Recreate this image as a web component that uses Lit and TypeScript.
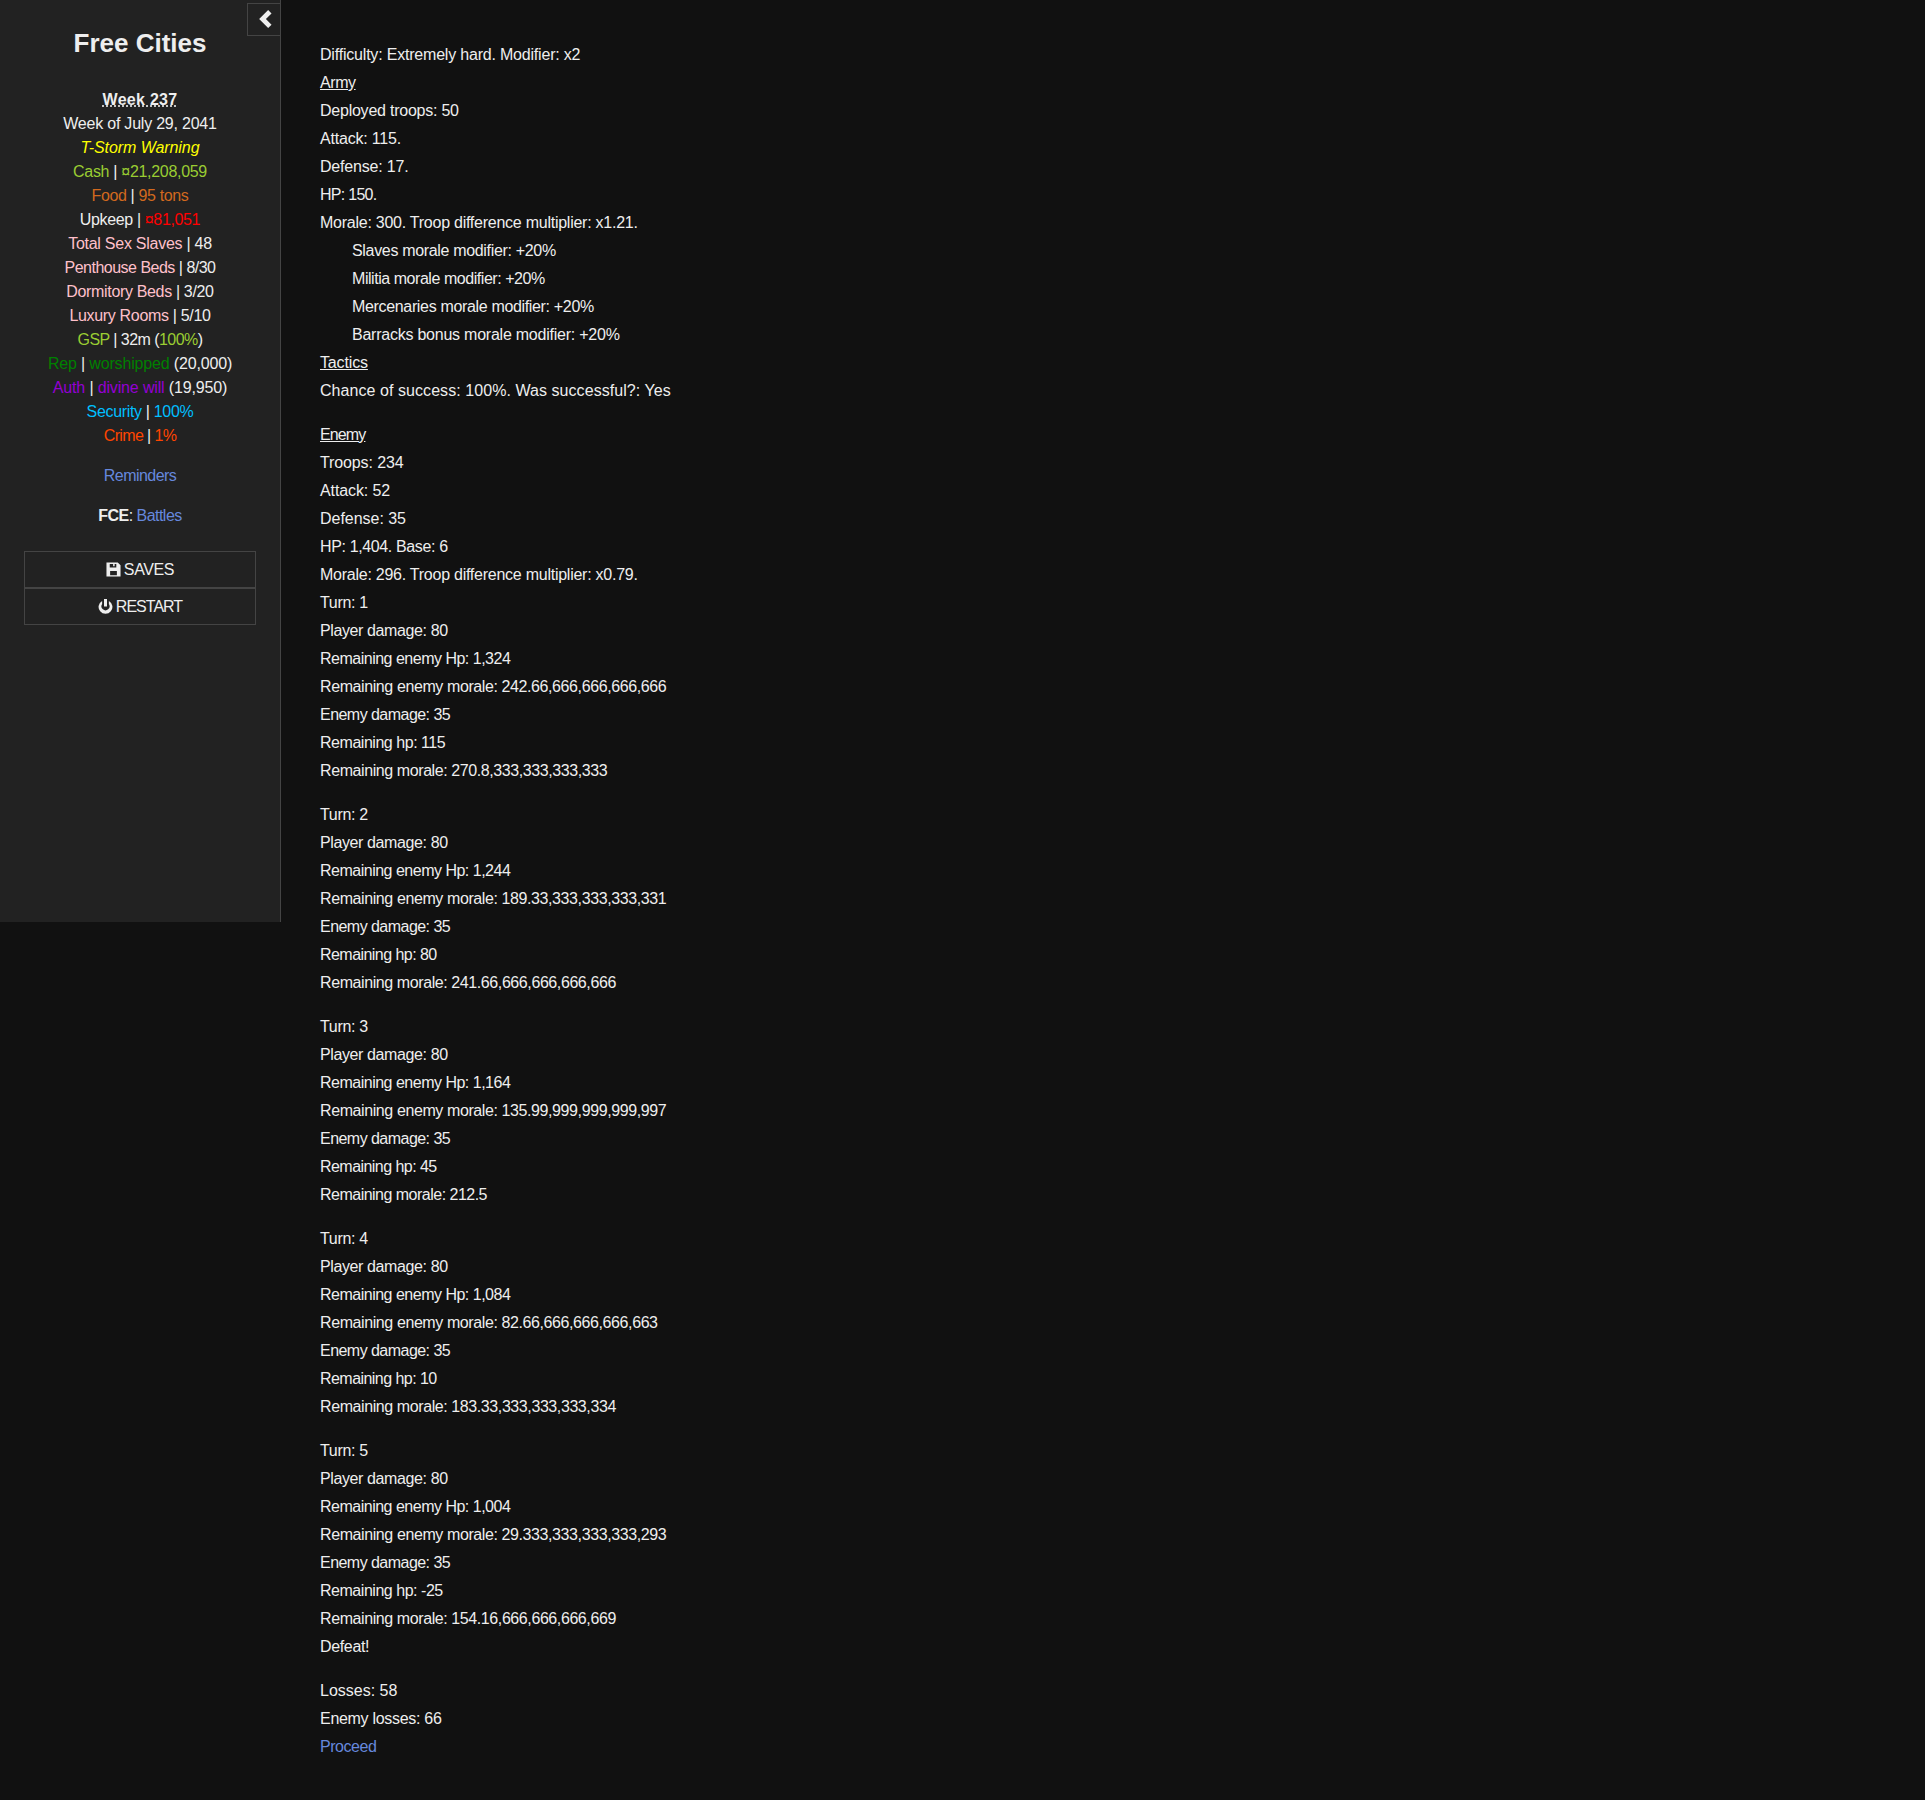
import { LitElement, html, css, svg } from "lit";
import { customElement } from "lit/decorators.js";

type Line = { t: string; e: number; c?: string };
const K = 1925 / 1568;
const FONT = '"Liberation Sans"';
const ctx = document.createElement("canvas").getContext("2d")!;

/** Letter-spacing that makes `text` span `span` reference (shrunk) pixels. */
function spacing(text: string, span: number, style = "") {
  ctx.font = `${style} 16px ${FONT}`;
  const natural = ctx.measureText(text).width;
  return `letter-spacing:${((span * K - natural) / text.length).toFixed(3)}px`;
}

const turn = (n: number, hp: string, hpEnd: number, morale: string, moraleEnd: number, remaining: string, remEnd: number): Line[] => [
  { t: `Turn: ${n}`, e: 300 },
  { t: "Player damage: 80", e: 365 },
  { t: `Remaining enemy Hp: ${hp}`, e: hpEnd },
  { t: `Remaining enemy morale: ${morale}`, e: moraleEnd },
  { t: "Enemy damage: 35", e: 367 },
  { t: `Remaining hp: ${remaining}`, e: remEnd },
];

const blocks: Line[][] = [
  [
    { t: "Difficulty: Extremely hard. Modifier: x2", e: 473 },
    { t: "Army", e: 290, c: "u" },
    { t: "Deployed troops: 50", e: 374 },
    { t: "Attack: 115.", e: 327 },
    { t: "Defense: 17.", e: 333 },
    { t: "HP: 150.", e: 307 },
    { t: "Morale: 300. Troop difference multiplier: x1.21.", e: 520 },
    { t: "Slaves morale modifier: +20%", e: 453, c: "ind" },
    { t: "Militia morale modifier: +20%", e: 444, c: "ind" },
    { t: "Mercenaries morale modifier: +20%", e: 484, c: "ind" },
    { t: "Barracks bonus morale modifier: +20%", e: 505, c: "ind" },
    { t: "Tactics", e: 300, c: "u" },
    { t: "Chance of success: 100%. Was successful?: Yes", e: 547 },
  ],
  [
    { t: "Enemy", e: 298, c: "u" },
    { t: "Troops: 234", e: 329 },
    { t: "Attack: 52", e: 318 },
    { t: "Defense: 35", e: 331 },
    { t: "HP: 1,404. Base: 6", e: 365 },
    { t: "Morale: 296. Troop difference multiplier: x0.79.", e: 520 },
    ...turn(1, "1,324", 416, "242.66,666,666,666,666", 543, "115", 363),
    { t: "Remaining morale: 270.8,333,333,333,333", e: 495 },
  ],
  [
    ...turn(2, "1,244", 416, "189.33,333,333,333,331", 543, "80", 356),
    { t: "Remaining morale: 241.66,666,666,666,666", e: 502 },
  ],
  [
    ...turn(3, "1,164", 416, "135.99,999,999,999,997", 543, "45", 356),
    { t: "Remaining morale: 212.5", e: 397 },
  ],
  [
    ...turn(4, "1,084", 416, "82.66,666,666,666,663", 536, "10", 356),
    { t: "Remaining morale: 183.33,333,333,333,334", e: 502 },
  ],
  [
    ...turn(5, "1,004", 416, "29.333,333,333,333,293", 543, "-25", 361),
    { t: "Remaining morale: 154.16,666,666,666,669", e: 502 },
    { t: "Defeat!", e: 301 },
  ],
  [
    { t: "Losses: 58", e: 324 },
    { t: "Enemy losses: 66", e: 360 },
    { t: "Proceed", e: 307, c: "link" },
  ],
];

const floppy = svg`<path fill="currentColor" fill-rule="evenodd" d="M.5 .5h12L15.5 3.5V15.5H.5zM4 2V5.8h7V2H9.2v2.6H7.6V2zM4.4 14.2h7.2V9.6H4.4z"/>`;
const power = svg`<path fill="currentColor" d="M6.4 0h3.2v8H6.4zM4.4 2v3.4a4.3 4.3 0 1 0 7.2 0V2a7.4 7.4 0 1 1-7.2 0z"/>`;
const chevron = svg`<path fill="currentColor" d="M10.8 0l3 3-5 5 5 5-3 3L2.8 8z"/>`;

@customElement("app-root")
export class AppRoot extends LitElement {
  static styles = css`
    :host {
      display: block;
      min-height: 1800px;
      background: #111;
      color: #eee;
      font: 16px/28px "Liberation Sans", Arial, sans-serif;
    }
    .page { display: flex; align-items: flex-start; }
    .bar {
      position: relative;
      box-sizing: border-box;
      width: 281px;
      height: 922px;
      flex: none;
      background: #222;
      border-right: 1px solid #444;
      padding: 24px 24px 0;
    }
    .stow {
      position: absolute;
      top: 3px;
      right: 0;
      box-sizing: border-box;
      width: 33px;
      height: 33px;
      background: #222;
      border: 1px solid #444;
      border-right: 0;
      color: #eee;
      display: flex;
      align-items: center;
      justify-content: flex-end;
      padding: 0 6px 2px 0;
    }
    .stow svg { width: 18px; height: 18px; display: block; }
    h1 {
      margin: 0 0 26px;
      font-size: 26px;
      line-height: 38px;
      font-weight: bold;
      text-align: center;
    }
    .stats { text-align: center; line-height: 24px; white-space: nowrap; }
    .week {
      font-weight: bold;
      text-decoration: underline dotted;
    }
    .italic { font-style: italic; }
    .yellow { color: yellow; }
    .yg { color: yellowgreen; }
    .choc { color: chocolate; }
    .red { color: red; }
    .pink { color: pink; }
    .green { color: green; }
    .violet { color: darkviolet; }
    .sky { color: deepskyblue; }
    .orange { color: orangered; }
    .link { color: #68d; }
    .gap { margin-top: 16px; }
    .menu {
      margin-top: 23px;
      border: 1px solid #444;
    }
    .menu div {
      height: 35px;
      display: flex;
      align-items: center;
      justify-content: center;
      gap: 3px;
    }
    .menu div + div { border-top: 2px solid #444; }
    .menu svg { width: 15px; height: 15px; display: block; }
    .main { padding: 41px 0 0 39px; }
    .block + .block { margin-top: 16px; }
    .u { text-decoration: underline; }
    .ind { padding-left: 32px; }
    .line { height: 28px; white-space: nowrap; }
  `;

  render() {
    const sp = spacing;
    return html`<div class="page">
      <aside class="bar">
        <div class="stow"><svg viewBox="0 0 16 16">${chevron}</svg></div>
        <h1>Free Cities</h1>
        <div class="stats">
          <div style=${sp("Week 237", 61, "bold")}><span class="week">Week 237</span></div>
          <div style=${sp("Week of July 29, 2041", 125)}>Week of July 29, 2041</div>
          <div class="italic yellow" style=${sp("T-Storm Warning", 97, "italic")}>T-Storm Warning</div>
          <div style=${sp("Cash | ¤21,208,059", 109)}><span class="yg">Cash</span> | <span class="yg">¤21,208,059</span></div>
          <div style=${sp("Food | 95 tons", 79)}><span class="choc">Food</span> | <span class="choc">95 tons</span></div>
          <div style=${sp("Upkeep | ¤81,051", 98)}>Upkeep | <span class="red">¤81,051</span></div>
          <div style=${sp("Total Sex Slaves | 48", 117)}><span class="pink">Total Sex Slaves</span> | 48</div>
          <div style=${sp("Penthouse Beds | 8/30", 123)}><span class="pink">Penthouse Beds</span> | 8/30</div>
          <div style=${sp("Dormitory Beds | 3/20", 120)}><span class="pink">Dormitory Beds</span> | 3/20</div>
          <div style=${sp("Luxury Rooms | 5/10", 115)}><span class="pink">Luxury Rooms</span> | 5/10</div>
          <div style=${sp("GSP | 32m (100%)", 102)}><span class="yg">GSP</span> | 32m (<span class="yg">100%</span>)</div>
          <div style=${sp("Rep | worshipped (20,000)", 150)}><span class="green">Rep</span> | <span class="green">worshipped</span> (20,000)</div>
          <div style=${sp("Auth | divine will (19,950)", 142)}><span class="violet">Auth</span> | <span class="violet">divine will</span> (19,950)</div>
          <div style=${sp("Security | 100%", 87)}><span class="sky">Security</span> | <span class="sky">100%</span></div>
          <div style=${sp("Crime | 1%", 59)}><span class="orange">Crime</span> | <span class="orange">1%</span></div>
          <div class="gap link" style=${sp("Reminders", 59)}>Reminders</div>
          <div class="gap" style=${sp("FCE: Battles", 68)}><b>FCE</b>: <span class="link">Battles</span></div>
        </div>
        <div class="menu">
          <div><svg viewBox="0 0 16 16">${floppy}</svg><span style=${sp("SAVES", 41)}>SAVES</span></div>
          <div><svg viewBox="0 0 16 16">${power}</svg><span style=${sp("RESTART", 54)}>RESTART</span></div>
        </div>
      </aside>
      <main class="main">
        ${blocks.map(
          (b) => html`<div class="block">
            ${b.map((l) => {
              const indented = l.c === "ind";
              const start = indented ? 287 : 261;
              return html`<div class="line ${indented ? "ind" : ""}"><span class="${indented ? "" : l.c ?? ""}" style=${sp(l.t, l.e - start)}>${l.t}</span></div>`;
            })}
          </div>`
        )}
      </main>
    </div>`;
  }
}
